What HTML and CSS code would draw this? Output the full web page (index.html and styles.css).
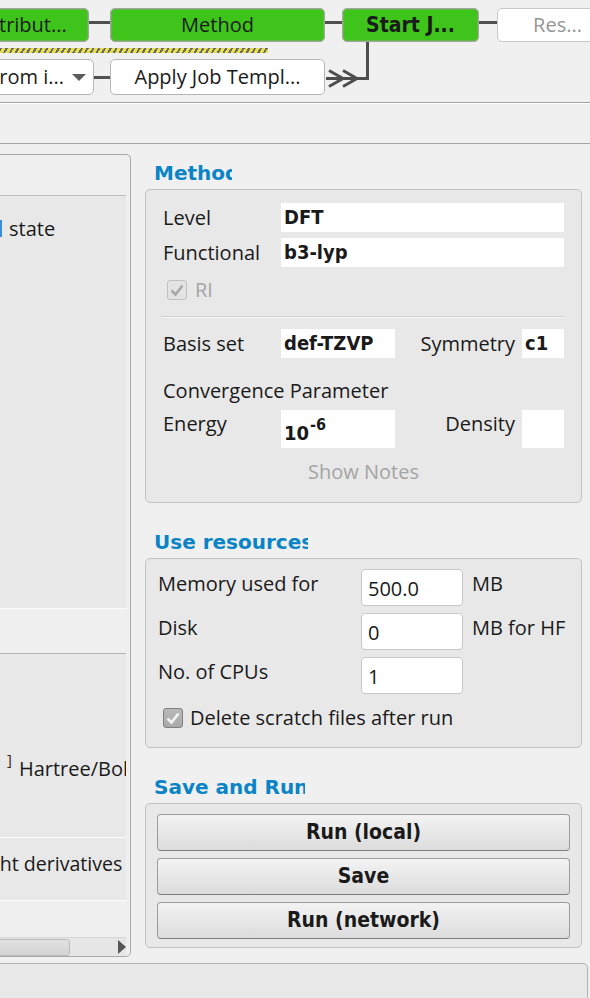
FILE: index.html
```html
<!DOCTYPE html>
<html>
<head>
<meta charset="utf-8">
<title>Job setup</title>
<link rel="stylesheet" href="styles.css">
</head>
<body>
<div class="app">
  <div class="workflow">
    <div class="wf-row wf-row1">
      <div class="step done step-attr">Attribut...</div>
      <div class="conn"></div>
      <div class="step done step-method">Method</div>
      <div class="conn conn-b"></div>
      <div class="step done step-start">Start J...</div>
      <div class="conn conn-c"></div>
      <div class="step todo">Res...</div>
    </div>
    <div class="hatch"></div>
    <div class="wf-row wf-row2">
      <div class="combo"><span>From i...</span><span class="combo-arrow"></span></div>
      <div class="conn conn-mid"></div>
      <div class="step plain">Apply Job Templ...</div>
    </div>
    <svg class="wf-link" width="590" height="102" viewBox="0 0 590 102">
      <path d="M326 78.5 H367.5 V42" fill="none" stroke="#4d4d4d" stroke-width="3"/>
      <path d="M329 70.5 L343 78.5 L329 86.5 M343 70.5 L357 78.5 L343 86.5" fill="none" stroke="#4d4d4d" stroke-width="3"/>
    </svg>
  </div>
  <div class="toolbar"></div>
  <div class="main">
    <div class="leftpanel">
      <div class="lp-head"></div>
      <div class="lp-a">
        <div class="state-row"><span class="radio-edge"></span><span class="lp-text">state</span></div>
      </div>
      <div class="lp-band"></div>
      <div class="lp-c">
        <div class="unit-row"><span class="bracket">]</span><span class="lp-text hartree">Hartree/Bohr</span></div>
      </div>
      <div class="lp-d"><span class="lp-text deriv">ght derivatives</span></div>
      <div class="lp-e"></div>
      <div class="lp-scroll"><div class="sb-handle"></div><div class="sb-arrow"></div></div>
    </div>
    <div class="rightcol">
      <div class="gtitle t-method">Method</div>
      <div class="group g-method">
        <div class="frow"><div class="flabel">Level</div><div class="fval fval-wide">DFT</div></div>
        <div class="frow"><div class="flabel">Functional</div><div class="fval fval-wide">b3-lyp</div></div>
        <div class="check-row ri">
          <span class="cbox cbox-disabled"><svg width="20" height="20" viewBox="0 0 20 20"><path d="M4.5 10.5 L8.5 14.5 L15.5 5.5" fill="none" stroke="#a8a8a8" stroke-width="2.6"/></svg></span>
          <span class="ctext muted">RI</span>
        </div>
        <div class="sep"></div>
        <div class="frow basis">
          <div class="flabel">Basis set</div>
          <div class="fval fval-mid">def-TZVP</div>
          <div class="spacer"></div>
          <div class="rlab">Symmetry</div>
          <div class="fval fval-small">c1</div>
        </div>
        <div class="ftext">Convergence Parameter</div>
        <div class="frow energy">
          <div class="flabel">Energy</div>
          <div class="fval fval-mid fval-tall">10<sup>-6</sup></div>
          <div class="spacer"></div>
          <div class="rlab">Density</div>
          <div class="fval fval-small fval-tall"></div>
        </div>
        <div class="notes">Show Notes</div>
      </div>

      <div class="gtitle t-res">Use resources</div>
      <div class="group g-res">
        <div class="rrow"><div class="rlabel">Memory used for</div><div class="rinput">500.0</div><div class="runit">MB</div></div>
        <div class="rrow"><div class="rlabel">Disk</div><div class="rinput">0</div><div class="runit">MB for HF</div></div>
        <div class="rrow"><div class="rlabel">No. of CPUs</div><div class="rinput">1</div></div>
        <div class="check-row del">
          <span class="cbox cbox-checked"><svg width="20" height="20" viewBox="0 0 20 20"><path d="M4.5 10.5 L8.5 14.5 L15.5 5.5" fill="none" stroke="#f2f2f2" stroke-width="2.8"/></svg></span>
          <span class="ctext">Delete scratch files after run</span>
        </div>
      </div>

      <div class="gtitle t-run">Save and Run</div>
      <div class="group g-run">
        <div class="rbtn">Run (local)</div>
        <div class="rbtn">Save</div>
        <div class="rbtn">Run (network)</div>
      </div>
    </div>
  </div>
  <div class="bottompanel"></div>
</div>
</body>
</html>
```

FILE: styles.css
```css
* { box-sizing: border-box; }
html, body { margin: 0; padding: 0; }
body {
  width: 590px;
  height: 998px;
  overflow: hidden;
  background: #f0f0f0;
  font-family: "Open Sans", "Noto Sans", sans-serif;
  font-size: 20px;
  color: #1a1a1a;
}
.app {
  width: 590px;
  height: 998px;
  overflow: hidden;
  display: flex;
  flex-direction: column;
}

/* workflow */
.workflow { position: relative; flex: none; height: 102px; padding-top: 8px; }
.wf-row { display: flex; align-items: flex-start; }
.wf-row1 { height: 34px; }
.step {
  flex: none;
  height: 34px;
  border-radius: 5px;
  display: flex;
  align-items: center;
  justify-content: center;
  white-space: nowrap;
  overflow: hidden;
  line-height: 1;
}
.step.done {
  background: #3fc41b;
  border: 1px solid #a3a3a3;
  box-shadow: inset 0 0 0 1px #62bb45;
}
.step-attr { width: 132px; margin-left: -43px; }
.step-method { width: 215px; }
.step-start {
  width: 137px;
  font-family: "DejaVu Sans Condensed", "DejaVu Sans", sans-serif;
  font-stretch: condensed;
  font-weight: bold;
  font-size: 21px;
}
.step.todo { width: 121px; background: #fff; border: 1px solid #c8c8c8; color: #959595; }
.step.plain { width: 215px; height: 36px; background: #fff; border: 1px solid #b6b6b6; }
.conn { flex: none; width: 21px; height: 3px; background: #505050; margin-top: 13px; }
.conn-b { width: 17px; }
.conn-c { width: 18px; }
.conn-mid { width: 16px; margin-top: 0; }
.hatch {
  width: 268px;
  height: 5px;
  margin-top: 6px;
  background: repeating-linear-gradient(120deg, #6a6a6a 0 2px, #e7e04b 2px 5px);
}
.wf-row2 { margin-top: 6px; height: 36px; align-items: center; }
.combo {
  flex: none;
  width: 108px;
  margin-left: -14px;
  height: 36px;
  background: #fff;
  border: 1px solid #b6b6b6;
  border-radius: 5px;
  display: flex;
  align-items: center;
  padding-left: 2px;
  white-space: nowrap;
  line-height: 1;
}
.combo-arrow {
  margin-left: auto;
  margin-right: 7px;
  width: 0;
  height: 0;
  border-left: 7px solid transparent;
  border-right: 7px solid transparent;
  border-top: 7px solid #5c5c5c;
}
.wf-link { position: absolute; left: 0; top: 0; pointer-events: none; }

.toolbar {
  flex: none;
  height: 42px;
  border-top: 1px solid #a4a4a4;
  border-bottom: 1px solid #a4a4a4;
  box-shadow: inset 0 1px 0 #fdfdfd;
}

/* main */
.main { flex: none; height: 819px; display: flex; align-items: flex-start; }

.leftpanel {
  flex: none;
  width: 131px;
  height: 803px;
  margin-top: 10px;
  border: 1px solid #a9a9a9;
  border-left: none;
  border-radius: 0 5px 5px 0;
  background: #efefef;
  padding-right: 4px;
  display: flex;
  flex-direction: column;
  overflow: hidden;
}
.lp-head { flex: none; height: 41px; border-bottom: 1px solid #bdbdbd; }
.lp-a { flex: none; height: 412px; background: #e8e8e8; padding-top: 19px; }
.lp-band { flex: none; height: 46px; background: #f0f0f0; border-top: 1px solid #fbfbfb; border-bottom: 1px solid #b2b2b2; }
.lp-c { flex: none; height: 183px; background: #e8e8e8; padding-top: 101px; overflow: hidden; }
.lp-d { flex: none; height: 63px; background: #e8e8e8; border-top: 1px solid #fbfbfb; padding-top: 12px; overflow: hidden; white-space: nowrap; }
.lp-e { flex: none; height: 37px; background: #f0f0f0; border-top: 1px solid #fbfbfb; }
.lp-text { line-height: 27px; white-space: nowrap; }
.state-row { display: flex; align-items: center; }
.radio-edge { width: 2px; height: 17px; background: #3b8ed6; flex: none; }
.state-row .lp-text { margin-left: 7px; }
.unit-row { display: flex; align-items: flex-start; white-space: nowrap; }
.bracket { font-size: 15px; line-height: 15px; margin-left: 7px; margin-top: -3px; color: #3a2a1a; }
.hartree { margin-left: 7px; }
.deriv { display: inline-block; margin-left: -11px; font-size: 19.6px; }
.lp-scroll {
  flex: none;
  height: 19px;
  display: flex;
  align-items: center;
  background: #e6e6e6;
  border-top: 1px solid #d6d6d6;
}
.sb-handle {
  width: 74px;
  margin-left: -4px;
  height: 17px;
  border: 1px solid #bababa;
  border-radius: 3px;
  background: linear-gradient(#e2e2e2, #d3d3d3);
}
.sb-arrow {
  margin-left: auto;
  width: 0;
  height: 0;
  border-left: 8px solid #555;
  border-top: 7px solid transparent;
  border-bottom: 7px solid transparent;
}

.rightcol { flex: none; width: 437px; margin-left: 14px; padding-top: 18px; }
.gtitle {
  height: 22px;
  line-height: 22px;
  margin-left: 9px;
  margin-bottom: 5px;
  overflow: hidden;
  white-space: nowrap;
  font-family: "DejaVu Sans", sans-serif;
  font-weight: bold;
  font-size: 20px;
  color: #0a84c6;
}
.t-method { width: 78px; }
.t-res { width: 154px; margin-top: 28px; }
.t-run { width: 151px; margin-top: 28px; }

.group { border: 1px solid #c2c2c2; border-radius: 5px; background: #e8e8e8; }
.g-method { height: 314px; padding: 13px 17px 0; }
.frow { display: flex; align-items: center; height: 29px; }
.frow + .frow { margin-top: 6px; }
.flabel { flex: none; width: 118px; line-height: 27px; white-space: nowrap; }
.fval {
  flex: none;
  height: 29px;
  background: #fff;
  font-family: "DejaVu Sans Condensed", "DejaVu Sans", sans-serif;
  font-stretch: condensed;
  font-weight: bold;
  font-size: 20px;
  line-height: 29px;
  padding-left: 3px;
  white-space: nowrap;
  color: #1a1a1a;
}
.fval-wide { flex: 1; }
.fval-mid { width: 114px; }
.fval-small { width: 42px; }
.spacer { flex: 1; }
.rlab { flex: none; line-height: 27px; margin-right: 7px; white-space: nowrap; }
.check-row { display: flex; align-items: center; height: 20px; }
.ri { margin-top: 13px; }
.cbox { flex: none; width: 20px; height: 20px; border-radius: 3px; display: block; }
.cbox svg { display: block; }
.cbox-disabled { margin-left: 4px; background: #e3e3e3; border: 1px solid #c0c0c0; }
.cbox-disabled svg { margin: -1px; }
.cbox-checked { margin-left: 5px; background: linear-gradient(#b9b9b9, #a9a9a9); border: 1px solid #7f7f7f; }
.cbox-checked svg { margin: -1px; }
.ctext { line-height: 20px; white-space: nowrap; }
.ri .ctext { margin-left: 8px; }
.del .ctext { margin-left: 7px; }
.muted { color: #a4a4a4; }
.sep { height: 2px; margin: 16px 0 0 -2px; border-top: 1px solid #d0d0d0; border-bottom: 1px solid #f5f5f5; }
.frow.basis { margin-top: 11px; }
.ftext { margin-top: 19px; line-height: 27px; white-space: nowrap; }
.frow.energy { margin-top: 6px; height: 38px; align-items: flex-start; }
.fval-tall { height: 38px; padding-top: 9px; }
.fval sup { font-size: 16px; line-height: 0; vertical-align: 10px; margin-left: 1px; }
.notes { margin-top: 10px; line-height: 27px; text-align: center; color: #a4a4a4; }

.g-res { height: 190px; padding: 10px 12px 0; }
.rrow { display: flex; align-items: flex-start; height: 37px; }
.rrow + .rrow { margin-top: 7px; }
.rlabel { flex: none; width: 203px; line-height: 27px; margin-top: 1px; white-space: nowrap; }
.rinput {
  flex: none;
  width: 102px;
  height: 37px;
  background: #fff;
  border: 1px solid #c8c8c8;
  border-radius: 4px;
  padding: 2px 0 0 6px;
  line-height: 33px;
}
.runit { margin-left: 9px; line-height: 27px; margin-top: 1px; white-space: nowrap; }
.del { margin-top: 14px; }

.g-run { height: 145px; padding: 10px 11px 0; }
.rbtn {
  height: 37px;
  border: 1px solid #9c9c9c;
  border-bottom-color: #7e7e7e;
  border-radius: 4px;
  background: linear-gradient(#f3f3f3, #dcdcdc);
  display: flex;
  align-items: center;
  justify-content: center;
  font-family: "DejaVu Sans Condensed", "DejaVu Sans", sans-serif;
  font-stretch: condensed;
  font-weight: bold;
  font-size: 21px;
  line-height: 1;
  color: #1a1a1a;
}
.rbtn + .rbtn { margin-top: 7px; }

.bottompanel {
  flex: none;
  width: 588px;
  height: 40px;
  border-top: 1px solid #b3b3b3;
  border-right: 1px solid #b3b3b3;
  border-radius: 0 5px 0 0;
  background: #e8e8e8;
}
```
